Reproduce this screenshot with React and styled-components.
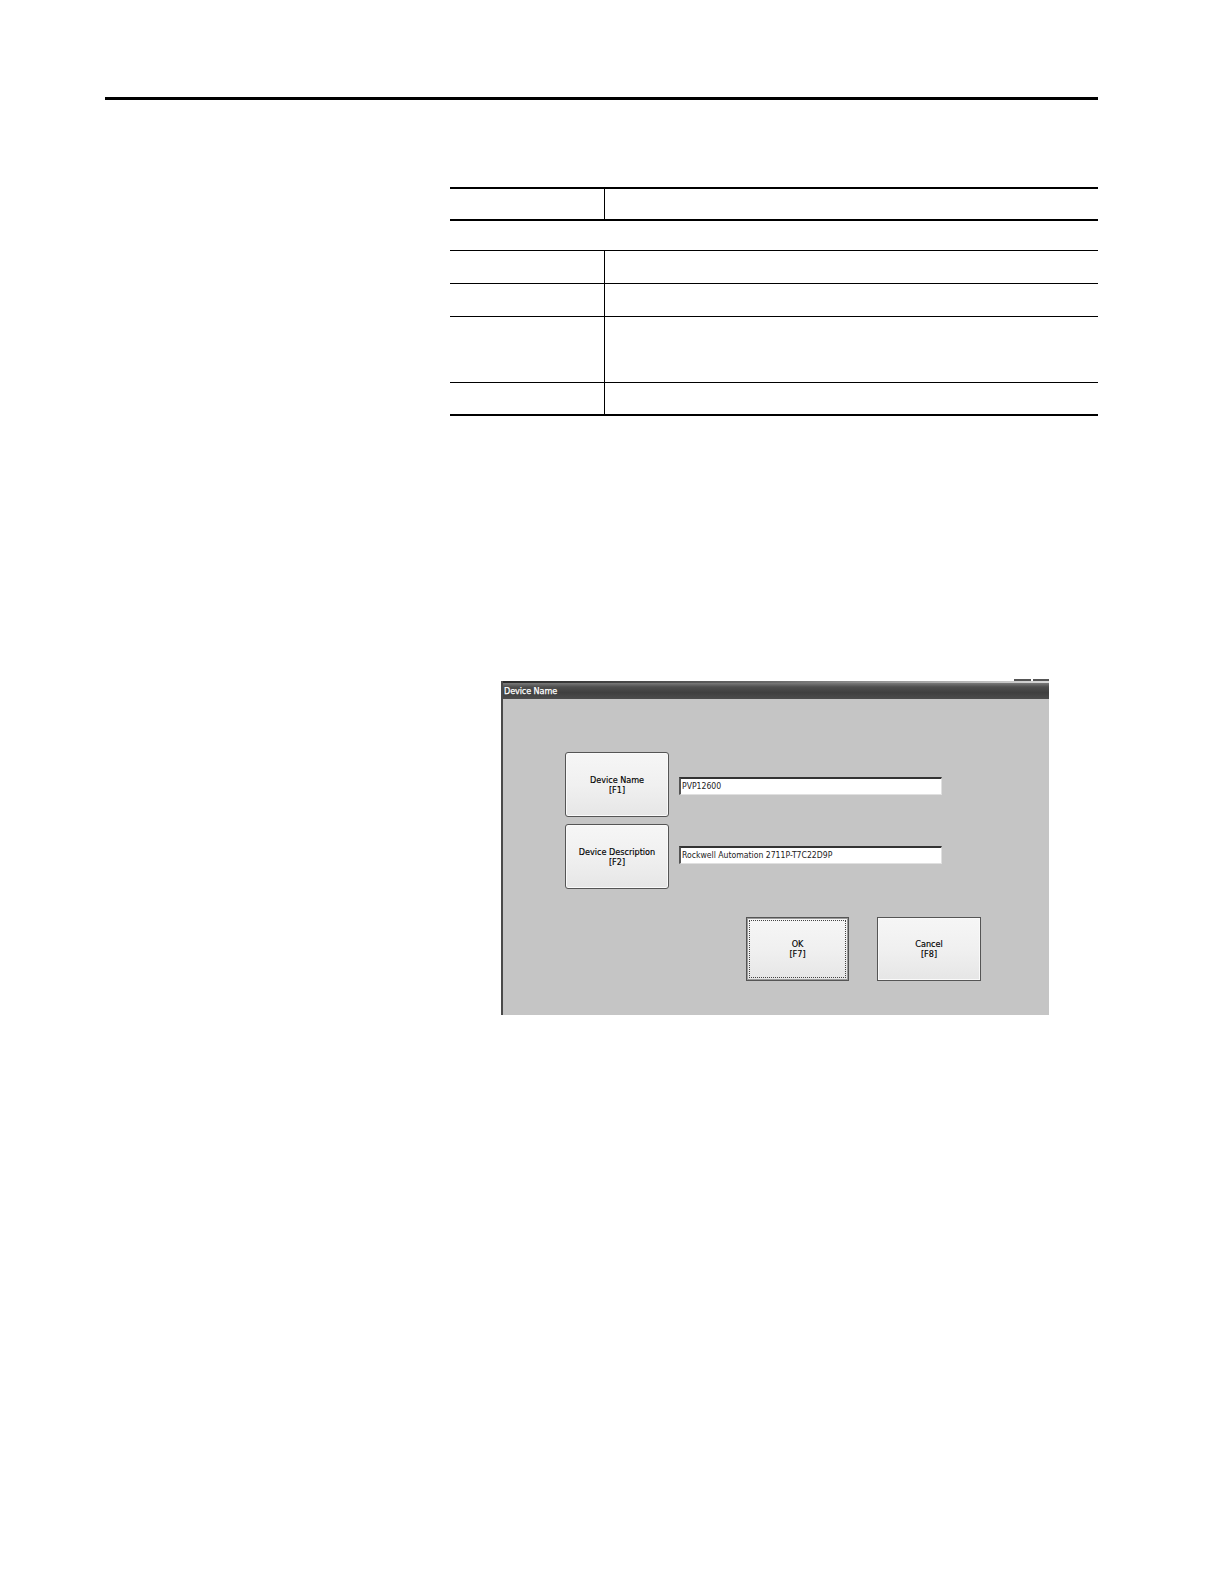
import React from "react";
import styled, { createGlobalStyle } from "styled-components";

const Global = createGlobalStyle`
  html, body { margin: 0; padding: 0; background: #ffffff; }
  body { font-family: "Liberation Sans", Arial, sans-serif; }
  *, *::before, *::after { box-sizing: border-box; }
`;

const Page = styled.div`
  width: 100%;
  padding: 97px 126px 0 105px;
  background: #fff;
`;

const Rule = styled.div`
  height: 3px;
  background: #000;
`;

const Table = styled.div`
  margin: 87px 0 0 345px;
  width: 648px;
  display: flex;
  flex-direction: column;
`;

const Row = styled.div`
  display: grid;
  grid-template-columns: ${(p) => (p.$span ? "1fr" : "154px 1fr")};
  height: ${(p) => p.$h}px;
  border-top: ${(p) => (p.$top ? "2px solid #000" : "none")};
  border-bottom: ${(p) => p.$bottom || 1}px solid #000;
`;

const Cell = styled.div`
  border-left: ${(p) => (p.$divider ? "1px solid #000" : "none")};
`;

const Dialog = styled.div`
  position: relative;
  margin: 265px 0 0 396px;
  width: 548px;
  height: 334px;
  display: flex;
  flex-direction: column;
  background: #c5c5c5;
  border-left: 2px solid #4a4a4a;
`;

const TopEdge = styled.div`
  height: 2px;
  background: linear-gradient(to right, #2a2a2a, #6a6a6a 50%, #d8d8d8);
`;

const WinButtons = styled.div`
  position: absolute;
  top: -2px;
  right: 0;
  width: 35px;
  height: 2px;
  display: flex;
  gap: 2px;
`;

const WinMark = styled.div`
  flex: 1;
  background: #555;
`;

const TitleBar = styled.div`
  height: 16px;
  display: flex;
  align-items: center;
  padding-left: 1px;
  background: linear-gradient(to bottom, #7a7a7a 0%, #4e4e4e 25%, #3f3f3f 60%, #4c4c4c 100%);
  color: #fff;
  font-family: "DejaVu Sans Condensed", "DejaVu Sans", sans-serif;
  font-size: 9px;
  letter-spacing: -0.1px;
  -webkit-text-stroke: 0.25px #fff;
`;

const Body = styled.div`
  flex: 1;
  display: flex;
  flex-direction: column;
  padding: 53px 0 0 62px;
`;

const FieldRow = styled.div`
  display: flex;
  align-items: center;
  gap: 10px;
  margin-bottom: 7px;
`;

const KeyButton = styled.div`
  position: relative;
  width: ${(p) => p.$w || 104}px;
  height: ${(p) => p.$h || 65}px;
  border: 1px solid #555;
  border-radius: ${(p) => (p.$square ? 0 : 3)}px;
  background: linear-gradient(to bottom, #f6f6f6 0%, #f0f0f0 50%, #e6e6e6 100%);
  display: flex;
  align-items: center;
  justify-content: center;
  text-align: center;
  font-family: "DejaVu Sans Condensed", "DejaVu Sans", sans-serif;
  font-size: 9px;
  line-height: 10px;
  color: #000;
  -webkit-text-stroke: 0.15px #000;
  box-shadow: inset 0 0 0 1px ${(p) => (p.$focused ? "#9a9a9a" : "#fafafa")};
`;

const Focus = styled.div`
  position: absolute;
  inset: 2px;
  border: 1px dotted #444;
  pointer-events: none;
`;

const Input = styled.div`
  width: 263px;
  height: 18px;
  margin-top: ${(p) => p.$shift || 0}px;
  background: #fff;
  border-top: 2px solid #333;
  border-left: 2px solid #555;
  border-right: 1px solid #e0e0e0;
  border-bottom: 1px solid #e0e0e0;
  display: flex;
  align-items: center;
  padding-left: 1px;
  font-family: "DejaVu Sans Condensed", "DejaVu Sans", sans-serif;
  font-size: 8.6px;
  color: #222;
`;

const Actions = styled.div`
  display: flex;
  gap: 28px;
  margin: 21px 0 0 181px;
`;

export default function App() {
  return (
    <>
      <Global />
      <Page>
        <Rule />
        <Table>
          <Row $h={34} $top $bottom={2}>
            <Cell />
            <Cell $divider />
          </Row>
          <Row $h={30} $span>
            <Cell />
          </Row>
          <Row $h={33}>
            <Cell />
            <Cell $divider />
          </Row>
          <Row $h={33}>
            <Cell />
            <Cell $divider />
          </Row>
          <Row $h={66}>
            <Cell />
            <Cell $divider />
          </Row>
          <Row $h={33} $bottom={2}>
            <Cell />
            <Cell $divider />
          </Row>
        </Table>
        <Dialog>
          <WinButtons>
            <WinMark />
            <WinMark />
          </WinButtons>
          <TopEdge />
          <TitleBar>Device Name</TitleBar>
          <Body>
            <FieldRow>
              <KeyButton>
                Device Name
                <br />
                [F1]
              </KeyButton>
              <Input $shift={2}>PVP12600</Input>
            </FieldRow>
            <FieldRow>
              <KeyButton>
                Device Description
                <br />
                [F2]
              </KeyButton>
              <Input $shift={-4}>Rockwell Automation 2711P-T7C22D9P</Input>
            </FieldRow>
            <Actions>
              <KeyButton $square $focused $h={64} $w={103}>
                <Focus />
                OK
                <br />
                [F7]
              </KeyButton>
              <KeyButton $square $h={64} $w={104}>
                Cancel
                <br />
                [F8]
              </KeyButton>
            </Actions>
          </Body>
        </Dialog>
      </Page>
    </>
  );
}
